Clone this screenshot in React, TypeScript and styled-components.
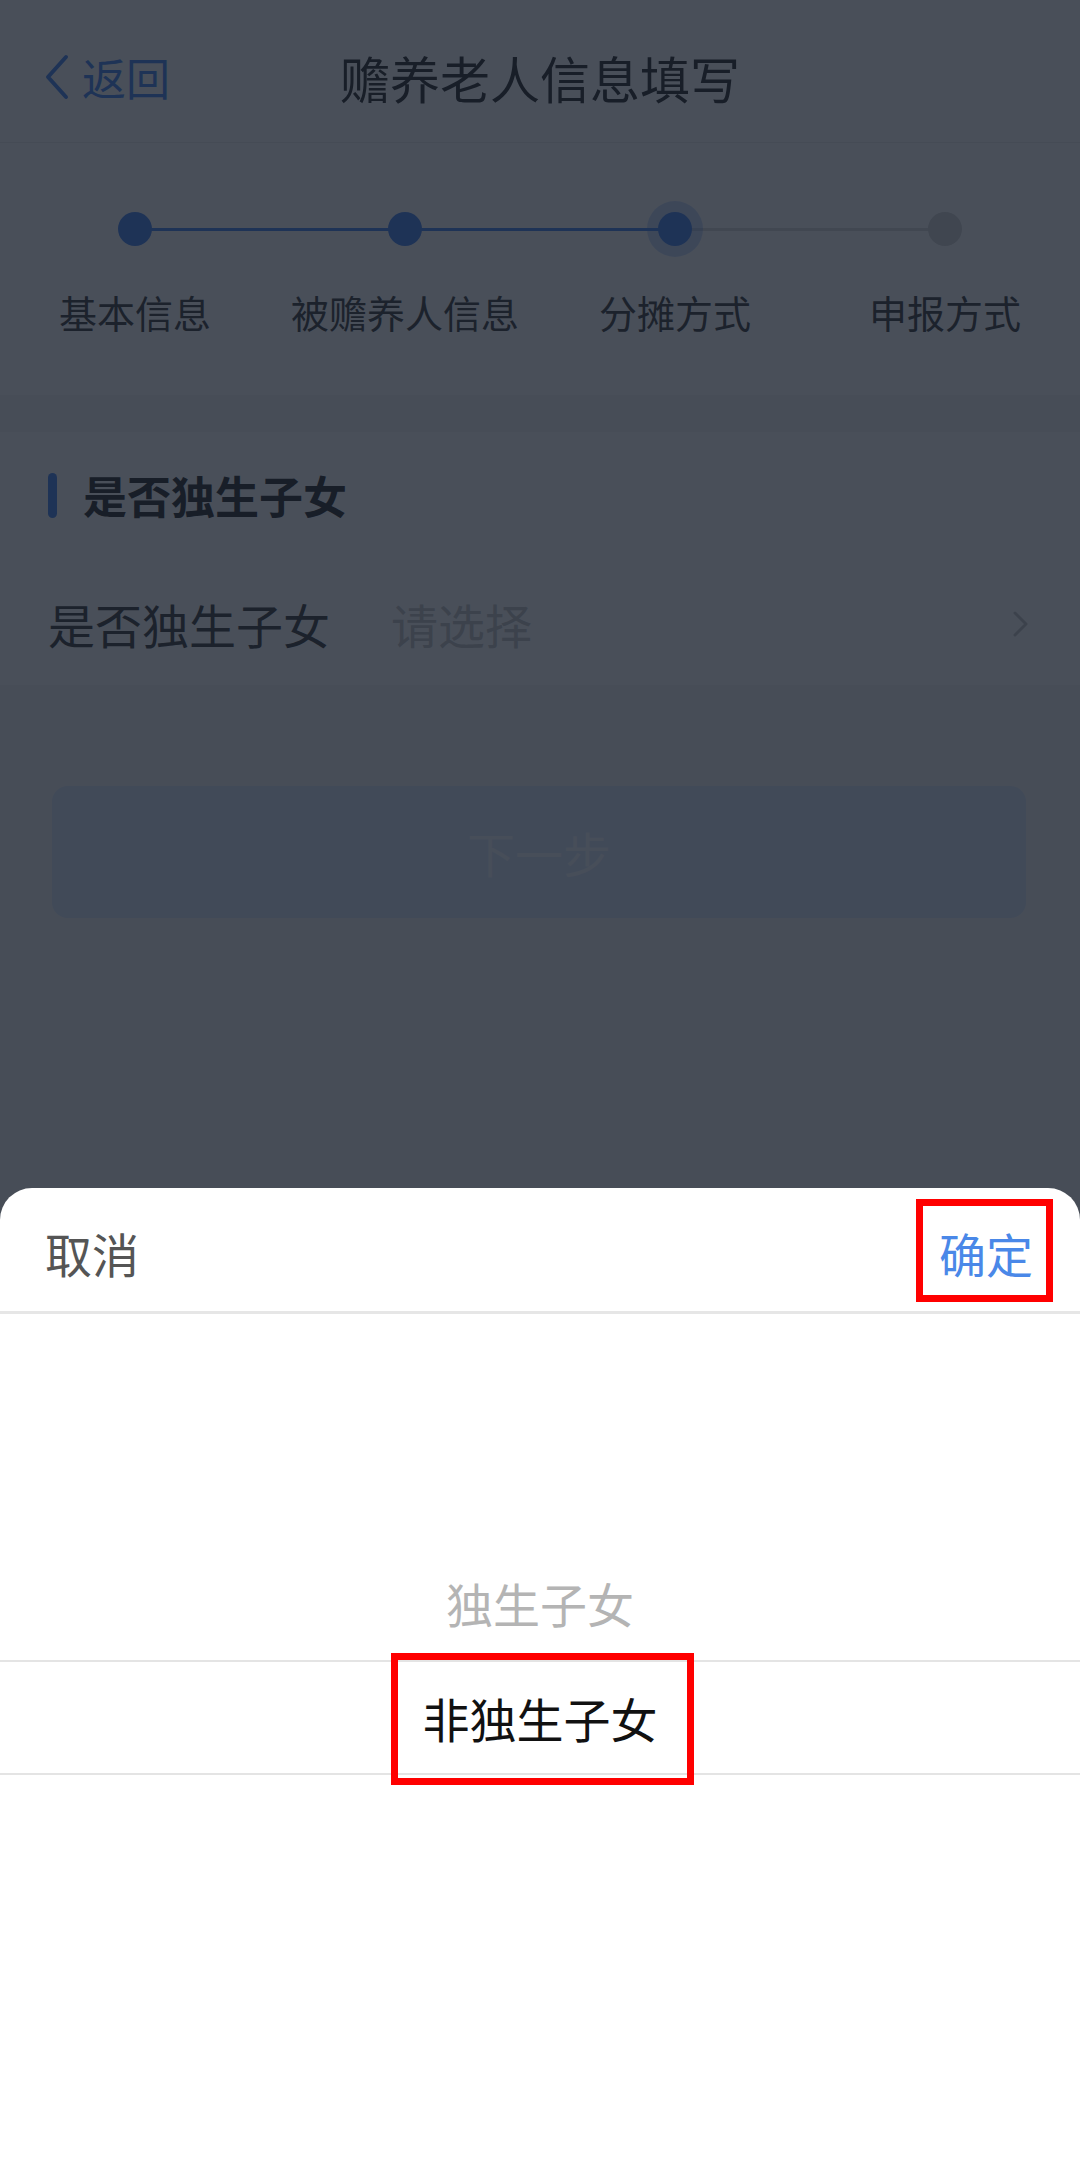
import styled, { createGlobalStyle } from 'styled-components';

const GlobalStyle = createGlobalStyle`
  * {
    box-sizing: border-box;
  }
  body {
    margin: 0;
    background: #f4f5f7;
    font-family: "Noto Sans CJK SC", "Noto Sans", sans-serif;
    color: #333;
  }
`;

const steps = [
  { label: '基本信息', status: 'done' },
  { label: '被赡养人信息', status: 'done' },
  { label: '分摊方式', status: 'active' },
  { label: '申报方式', status: 'todo' },
] as const;

type StepStatus = 'done' | 'active' | 'todo';

export default function App() {
  return (
    <>
      <GlobalStyle />
      <Page>
        <NavBar>
          <BackButton>
            <svg width="26" height="46" viewBox="0 0 26 46" fill="none">
              <polyline
                points="22,3 4,23 22,43"
                stroke="#3d7ff0"
                strokeWidth="4"
                strokeLinecap="round"
                strokeLinejoin="round"
              />
            </svg>
            <span>返回</span>
          </BackButton>
          <NavTitle>赡养老人信息填写</NavTitle>
        </NavBar>

        <StepBar>
          {steps.map((step, i) => (
            <Step key={step.label} $last={i === steps.length - 1} $lineDone={step.status === 'done'}>
              <DotWrap>
                <Dot $status={step.status} />
              </DotWrap>
              <StepLabel>{step.label}</StepLabel>
            </Step>
          ))}
        </StepBar>

        <Card>
          <SectionTitle>是否独生子女</SectionTitle>
          <FieldRow>
            <FieldLabel>是否独生子女</FieldLabel>
            <FieldValue>请选择</FieldValue>
            <svg width="18" height="28" viewBox="0 0 18 28" fill="none">
              <polyline
                points="3,3 14,14 3,25"
                stroke="#c4c4c4"
                strokeWidth="3"
                strokeLinecap="round"
                strokeLinejoin="round"
              />
            </svg>
          </FieldRow>
        </Card>

        <NextButton disabled>下一步</NextButton>
      </Page>

      <Mask />

      <Sheet>
        <SheetHeader>
          <SheetAction>取消</SheetAction>
          <SheetAction $primary>
            <Marked $inset="-27px -20px -22px -23px">确定</Marked>
          </SheetAction>
        </SheetHeader>
        <PickerColumn>
          <PickerItem>独生子女</PickerItem>
          <PickerItem $selected>
            <Marked $inset="-30px -36px -33px -32px">非独生子女</Marked>
          </PickerItem>
        </PickerColumn>
      </Sheet>
    </>
  );
}

const Page = styled.div`
  width: 1080px;
  min-height: 2160px;
  display: flex;
  flex-direction: column;
  background: #f4f5f7;
`;

const NavBar = styled.header`
  position: relative;
  height: 143px;
  padding-top: 12px;
  display: flex;
  align-items: center;
  justify-content: center;
  background: #fff;
  border-bottom: 1px solid #ececec;
`;

const BackButton = styled.div`
  position: absolute;
  left: 44px;
  top: 12px;
  bottom: 0;
  display: flex;
  align-items: center;
  gap: 12px;
  color: #3d7ff0;
  font-size: 44px;
`;

const NavTitle = styled.h1`
  margin: 0;
  font-size: 50px;
  font-weight: 400;
  color: #222;
`;

const StepBar = styled.div`
  display: grid;
  grid-template-columns: repeat(4, 1fr);
  padding: 58px 0 58px;
  background: #fff;
  margin-bottom: 37px;
`;

const Step = styled.div<{ $last: boolean; $lineDone: boolean }>`
  position: relative;
  display: flex;
  flex-direction: column;
  align-items: center;
  gap: 30px;

  &::after {
    content: '';
    display: ${p => (p.$last ? 'none' : 'block')};
    position: absolute;
    top: 27px;
    left: 50%;
    width: 100%;
    height: 3px;
    background: ${p => (p.$lineDone ? '#3d7ff0' : '#dadada')};
  }
`;

const DotWrap = styled.div`
  position: relative;
  z-index: 1;
  width: 56px;
  height: 56px;
  display: flex;
  align-items: center;
  justify-content: center;
`;

const Dot = styled.div<{ $status: StepStatus }>`
  width: 34px;
  height: 34px;
  border-radius: 50%;
  background: ${p => (p.$status === 'todo' ? '#d4d4d4' : '#3d7ff0')};
  box-shadow: ${p => (p.$status === 'active' ? '0 0 0 11px rgba(61, 127, 240, 0.28)' : 'none')};
`;

const StepLabel = styled.div`
  font-size: 38px;
  line-height: 50px;
  color: #333;
  white-space: nowrap;
`;

const Card = styled.section`
  background: #fff;
  padding: 33px 48px 0;
`;

const SectionTitle = styled.h2`
  margin: 0;
  display: flex;
  align-items: center;
  gap: 26px;
  font-size: 44px;
  line-height: 60px;
  font-weight: 700;
  color: #222;

  &::before {
    content: '';
    width: 9px;
    height: 45px;
    border-radius: 5px;
    background: #3d7ff0;
  }
`;

const FieldRow = styled.div`
  margin-top: 41px;
  height: 119px;
  display: flex;
  align-items: center;
  padding-bottom: 4px;
  padding-right: 2px;
`;

const FieldLabel = styled.div`
  width: 343px;
  font-size: 47px;
  color: #333;
`;

const FieldValue = styled.div`
  flex: 1;
  font-size: 47px;
  color: #c2c2c2;
`;

const NextButton = styled.button`
  margin: 101px 54px 0 52px;
  height: 132px;
  border: none;
  border-radius: 16px;
  background: #d9e6fb;
  color: #f4f8ff;
  font-family: inherit;
  font-size: 48px;
`;

const Mask = styled.div`
  position: fixed;
  inset: 0;
  z-index: 10;
  background: rgba(22, 30, 42, 0.78);
`;

const Sheet = styled.div`
  position: fixed;
  left: 0;
  right: 0;
  bottom: 0;
  z-index: 11;
  height: 972px;
  display: flex;
  flex-direction: column;
  background: #fff;
  border-radius: 32px 32px 0 0;
`;

const SheetHeader = styled.div`
  height: 126px;
  display: flex;
  align-items: center;
  justify-content: space-between;
  padding: 6px 47px 0 45px;
  border-bottom: 3px solid #e6e6e6;
`;

const SheetAction = styled.div<{ $primary?: boolean }>`
  font-size: 47px;
  line-height: 54px;
  color: ${p => (p.$primary ? '#4a88e8' : '#555')};
`;

const Marked = styled.span<{ $inset: string }>`
  position: relative;
  display: inline-block;

  &::after {
    content: '';
    position: absolute;
    inset: ${p => p.$inset};
    border: 7px solid #ff0000;
  }
`;

const PickerColumn = styled.div`
  padding-top: 231px;
  display: flex;
  flex-direction: column;
`;

const PickerItem = styled.div<{ $selected?: boolean }>`
  height: 115px;
  display: flex;
  align-items: center;
  justify-content: center;
  font-size: 47px;
  color: ${p => (p.$selected ? '#111' : '#b4b4b4')};
  border-top: ${p => (p.$selected ? '2px solid #e4e4e4' : 'none')};
  border-bottom: ${p => (p.$selected ? '2px solid #e4e4e4' : 'none')};
`;
